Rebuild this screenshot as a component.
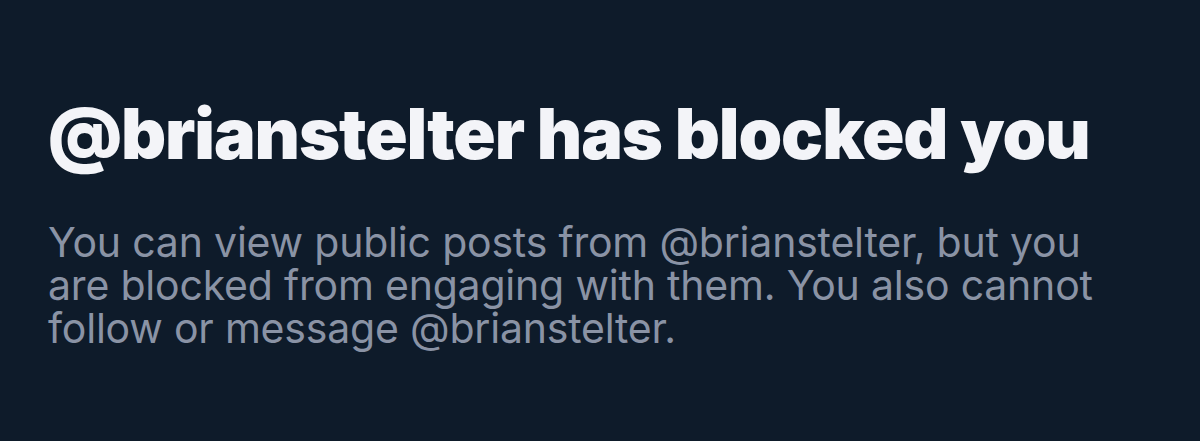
export default function App() {
  return (
    <div className="w-[1200px] h-[441px] bg-[#0e1b2a] pl-[48px] pt-[94px] overflow-hidden">
      <h1 className="text-[70px] leading-[80px] font-black text-[#f3f4f8] tracking-[-1.1px] [font-family:Inter,sans-serif]">
        @brianstelter has blocked you
      </h1>
      <p className="mt-[47px] w-[1100px] text-[41px] leading-[43px] text-[#8a93a5] tracking-[-0.2px] [font-family:Inter,sans-serif]">
        You can view public posts from @brianstelter, but you are blocked from engaging with them. You also cannot follow or message @brianstelter.
      </p>
    </div>
  );
}
